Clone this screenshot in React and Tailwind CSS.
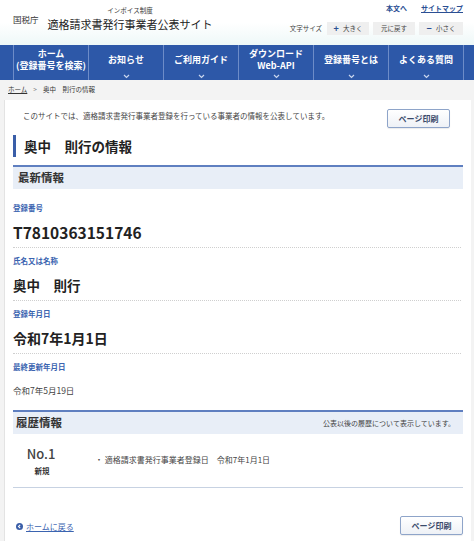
import React from "react";

const JP = { fontFamily: '"Noto Sans CJK JP", "Noto Sans", sans-serif' };

function Chevron() {
  return (
    <svg width="7" height="5" viewBox="0 0 7 5" className="mt-[2px]">
      <path d="M1 1 L3.5 3.5 L6 1" stroke="#c9d6ee" strokeWidth="1.2" fill="none" />
    </svg>
  );
}

function NavItem({ lines, chevron = true }) {
  return (
    <div className="w-[75px] h-full border-l border-[#6d8cc8] flex flex-col items-center justify-center text-white font-bold text-[9px] leading-[12px] relative">
      <div className="flex flex-col items-center justify-center flex-1 pt-[2px]">
        {lines.map((l, i) => (
          <div key={i}>{l}</div>
        ))}
      </div>
      <div className="h-[8px] flex items-start">{chevron ? <Chevron /> : null}</div>
    </div>
  );
}

function PrintButton() {
  return (
    <div className="w-[63px] h-[19px] border border-[#8ea4c9] rounded-[2px] bg-gradient-to-b from-white to-[#eef1f6] flex items-center justify-center text-[8px] font-bold text-[#3a4a6a] shadow-[0_1px_1px_rgba(0,0,0,0.08)]">
      ページ印刷
    </div>
  );
}

function Field({ label, value, size = "text-[15px]", big = true, last = false }) {
  return (
    <div className={`${last ? "" : "border-b border-dotted border-[#cfcfcf] pb-[5px]"} pt-[8px]`}>
      <div className="text-[7.5px] leading-[10px] text-[#3b64b0] font-bold">{label}</div>
      <div
        className={
          big
            ? `${size} leading-[20px] font-bold text-[#222] mt-[9px]`
            : "text-[8.5px] leading-[14px] text-[#444] mt-[11px]"
        }
      >
        {value}
      </div>
    </div>
  );
}

export default function App() {
  return (
    <div style={JP} className="w-[474px] h-[541px] overflow-hidden bg-[#f3f3f3] text-[#333]">
      {/* Header */}
      <div className="h-[45px] bg-gradient-to-b from-white via-white to-[#eef8f8] flex justify-between">
        <div className="flex items-start pl-[13px] pt-[13px]">
          <div className="text-[8.5px] text-[#333] mt-[0px]">国税庁</div>
          <div className="ml-[9px] -mt-[7px] flex flex-col items-center">
            <div className="text-[6.5px] leading-[9px] text-[#333]">インボイス制度</div>
            <div className="text-[11px] leading-[15px] text-[#222] mt-[2px]">適格請求書発行事業者公表サイト</div>
          </div>
        </div>
        <div className="flex flex-col items-end pr-[11px] pt-[3px]">
          <div className="flex gap-[14px] text-[7px] font-bold text-[#2b4f93] leading-[10px]">
            <span>本文へ</span>
            <span className="underline">サイトマップ</span>
          </div>
          <div className="flex items-center mt-[9px] text-[6.5px] text-[#444]">
            <span className="mr-[5px]">文字サイズ</span>
            <div className="w-[42px] h-[13px] bg-[#efefef] flex items-center justify-center">
              <span className="text-[#2b4f93] font-bold text-[9px] mr-[4px] leading-[10px]">+</span>大きく
            </div>
            <div className="w-[42px] h-[13px] bg-[#efefef] flex items-center justify-center ml-[4px]">元に戻す</div>
            <div className="w-[44px] h-[13px] bg-[#efefef] flex items-center justify-center ml-[4px]">
              <span className="text-[#2b4f93] font-bold text-[9px] mr-[4px] leading-[10px]">−</span>小さく
            </div>
          </div>
        </div>
      </div>

      {/* Nav */}
      <div className="h-[35px] bg-[#2d58a8] flex pl-[13px]">
        <NavItem lines={["ホーム", "(登録番号を検索)"]} chevron={false} />
        <NavItem lines={["お知らせ"]} />
        <NavItem lines={["ご利用ガイド"]} />
        <NavItem lines={["ダウンロード", "Web-API"]} />
        <NavItem lines={["登録番号とは"]} />
        <NavItem lines={["よくある質問"]} />
        <div className="border-l border-[#6d8cc8] h-full" />
      </div>

      {/* Breadcrumb */}
      <div className="h-[20px] flex items-center pl-[8px] text-[6.5px] text-[#333]">
        <span className="underline">ホーム</span>
        <span className="mx-[6px] text-[#777]">&gt;</span>
        <span>奥中　則行の情報</span>
      </div>

      {/* Card */}
      <div className="ml-[4px] mr-[3px] bg-white border-l border-[#e3e3e3] h-[441px] px-[8px]">
        <div className="flex justify-between items-start pt-[9px]">
          <div className="text-[7.5px] text-[#444] pl-[10px] pt-[1px]">
            このサイトでは、適格請求書発行事業者登録を行っている事業者の情報を公表しています。
          </div>
          <div className="mr-[13px]">
            <PrintButton />
          </div>
        </div>

        <div className="mt-[7px] flex items-center h-[22px]">
          <div className="w-[3px] h-[22px] bg-[#3a5ea8]" />
          <div className="ml-[8px] text-[13.5px] font-bold text-[#222]">奥中　則行の情報</div>
        </div>

        <div className="mt-[8px] border-t-2 border-[#5f7fc0] bg-[#e8eef7] h-[24px] flex items-center pl-[5px] text-[11.5px] font-bold text-[#333]">
          最新情報
        </div>

        <div className="pr-[2px] pt-[6px]">
          <Field label="登録番号" value="T7810363151746" size="text-[15.5px]" />
          <Field label="氏名又は名称" value="奥中　則行" size="text-[13.5px]" />
          <Field label="登録年月日" value="令和7年1月1日" size="text-[14px]" />
          <Field label="最終更新年月日" value="令和7年5月19日" big={false} last />
        </div>

        <div className="mt-[13px] border-t-2 border-[#5f7fc0] bg-[#e8eef7] h-[24px] flex items-center justify-between pl-[3px] pr-[8px]">
          <span className="text-[11.5px] font-bold text-[#333]">履歴情報</span>
          <span className="text-[7px] text-[#444]">公表以後の履歴について表示しています。</span>
        </div>

        <div className="border-b border-[#c7d2e2] h-[54px] flex items-center">
          <div className="w-[54px] flex flex-col items-center pt-[2px]">
            <div className="text-[13px] leading-[16px] font-medium text-[#444] pl-[2px]">No.1</div>
            <div className="text-[7.5px] leading-[12px] font-bold text-[#333] mt-[3px] pl-[4px]">新規</div>
          </div>
          <div className="ml-[28px] text-[8px] text-[#444] pb-[2px]">・ 適格請求書発行事業者登録日　令和7年1月1日</div>
        </div>

        <div className="mt-[28px] flex justify-between items-center">
          <div className="flex items-center pl-[3px] pt-[2px]">
            <svg width="7" height="7" viewBox="0 0 7 7">
              <circle cx="3.5" cy="3.5" r="3.5" fill="#3a5ea8" />
              <path d="M4.2 1.8 L2.5 3.5 L4.2 5.2" stroke="white" strokeWidth="1.1" fill="none" />
            </svg>
            <span className="ml-[3px] text-[8px] text-[#3b64b0] underline">ホームに戻る</span>
          </div>
          <div className="mr-[0px]">
            <PrintButton />
          </div>
        </div>
      </div>
    </div>
  );
}
